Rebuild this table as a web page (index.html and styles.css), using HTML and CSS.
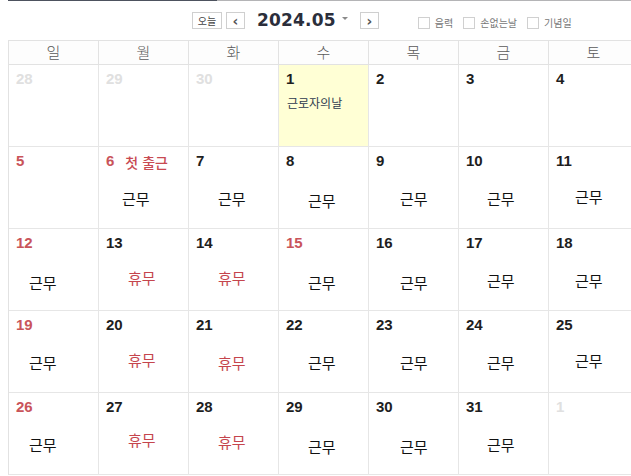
FILE: index.html
```html
<!DOCTYPE html>
<html lang="ko">
<head>
<meta charset="utf-8">
<link rel="stylesheet" href="styles.css">
</head>
<body>
<div class="topline"><span class="tab"></span></div>
<div class="toolbar">
  <button class="btn today">오늘</button>
  <button class="btn arrow">&#8249;</button>
  <div class="title">2024.05</div>
  <span class="caret"></span>
  <button class="btn arrow">&#8250;</button>
  <label class="chk first"><span class="box"></span>음력</label>
  <label class="chk"><span class="box"></span>손없는날</label>
  <label class="chk"><span class="box"></span>기념일</label>
</div>
<div class="cal">
  <div class="head">일</div><div class="head">월</div><div class="head">화</div><div class="head">수</div><div class="head">목</div><div class="head">금</div><div class="head">토</div>

  <div class="day"><div class="num other">28</div></div>
  <div class="day"><div class="num other">29</div></div>
  <div class="day"><div class="num other">30</div></div>
  <div class="day now"><div class="num">1</div><div class="event">근로자의날</div></div>
  <div class="day"><div class="num">2</div></div>
  <div class="day"><div class="num">3</div></div>
  <div class="day"><div class="num">4</div></div>

  <div class="day"><div class="num red">5</div></div>
  <div class="day"><div class="num red">6<span class="memo">첫 출근</span></div><div class="work on">근무</div></div>
  <div class="day"><div class="num">7</div><div class="work on">근무</div></div>
  <div class="day"><div class="num">8</div><div class="work on low">근무</div></div>
  <div class="day"><div class="num">9</div><div class="work on">근무</div></div>
  <div class="day"><div class="num">10</div><div class="work on">근무</div></div>
  <div class="day"><div class="num">11</div><div class="work on high">근무</div></div>

  <div class="day"><div class="num red">12</div><div class="work on low">근무</div></div>
  <div class="day"><div class="num">13</div><div class="work off">휴무</div></div>
  <div class="day"><div class="num">14</div><div class="work off">휴무</div></div>
  <div class="day"><div class="num red">15</div><div class="work on low">근무</div></div>
  <div class="day"><div class="num">16</div><div class="work on low">근무</div></div>
  <div class="day"><div class="num">17</div><div class="work on">근무</div></div>
  <div class="day"><div class="num">18</div><div class="work on">근무</div></div>

  <div class="day"><div class="num red">19</div><div class="work on">근무</div></div>
  <div class="day"><div class="num">20</div><div class="work off">휴무</div></div>
  <div class="day"><div class="num">21</div><div class="work off low">휴무</div></div>
  <div class="day"><div class="num">22</div><div class="work on">근무</div></div>
  <div class="day"><div class="num">23</div><div class="work on">근무</div></div>
  <div class="day"><div class="num">24</div><div class="work on">근무</div></div>
  <div class="day"><div class="num">25</div><div class="work on high">근무</div></div>

  <div class="day"><div class="num red">26</div><div class="work on">근무</div></div>
  <div class="day"><div class="num">27</div><div class="work off high">휴무</div></div>
  <div class="day"><div class="num">28</div><div class="work off">휴무</div></div>
  <div class="day"><div class="num">29</div><div class="work on low">근무</div></div>
  <div class="day"><div class="num">30</div><div class="work on low">근무</div></div>
  <div class="day"><div class="num">31</div><div class="work on">근무</div></div>
  <div class="day"><div class="num other">1</div></div>
</div>
</body>
</html>
```

FILE: styles.css
```css
html, body {
  margin: 0;
  padding: 0;
  background: #fff;
  overflow: hidden;
  width: 631px;
  height: 476px;
  font-family: "Noto Sans CJK KR", "Noto Sans", sans-serif;
}

.topline {
  margin-left: 8px;
  height: 1px;
  background: #b4b4b6;
  display: flex;
}
.tab {
  width: 209px;
  background: #4d525e;
}

.toolbar {
  height: 28px;
  padding: 0 0 11px 192px;
  display: flex;
  align-items: flex-end;
}

.btn {
  box-sizing: border-box;
  height: 17px;
  margin: 0;
  padding: 0;
  border: 1px solid #cfcfcf;
  background: #fff;
  color: #444;
  font-family: "Noto Sans CJK KR", sans-serif;
  font-size: 10px;
  line-height: 14px;
}
.today {
  width: 30px;
}
.arrow {
  width: 19px;
  margin-left: 4px;
  font-family: "DejaVu Sans", sans-serif;
  font-size: 14px;
  font-weight: bold;
  line-height: 12px;
  color: #555;
}
.title {
  margin-left: 12px;
  font-family: "DejaVu Sans", sans-serif;
  font-weight: bold;
  font-size: 17px;
  line-height: 17px;
  color: #2b2e3b;
  letter-spacing: 0.2px;
}
.caret {
  width: 0;
  height: 0;
  margin: 0 0 9px 6px;
  border-left: 3px solid transparent;
  border-right: 3px solid transparent;
  border-top: 3px solid #8a8a8a;
}
.caret + .arrow {
  margin-left: 12px;
}

.chk {
  display: flex;
  align-items: center;
  height: 12px;
  margin-left: 10px;
  font-size: 10px;
  line-height: 12px;
  color: #777;
}
.chk.first {
  margin-left: 39px;
}
.box {
  box-sizing: border-box;
  width: 12px;
  height: 12px;
  border: 1px solid #d0d0d0;
  background: #fff;
  margin-right: 5px;
}

.cal {
  margin-left: 8px;
  display: grid;
  grid-template-columns: repeat(7, 90px);
  grid-template-rows: 24px repeat(5, 82px);
  border-top: 1px solid #e2e2e2;
  border-left: 1px solid #e2e2e2;
  width: 630px;
}
.head {
  box-sizing: border-box;
  border-right: 1px solid #e2e2e2;
  border-bottom: 1px solid #e2e2e2;
  background: #fdfdfd;
  text-align: center;
  font-size: 15px;
  font-weight: 300;
  line-height: 22px;
  color: #5a5a5a;
}
.day {
  box-sizing: border-box;
  border-right: 1px solid #e6e6e6;
  border-bottom: 1px solid #e6e6e6;
  padding: 5px 0 0 0;
  display: flex;
  flex-direction: column;
}
.now {
  background: #ffffd5;
}
.num {
  padding-left: 7px;
  font-family: "Liberation Sans", Arial, sans-serif;
  font-weight: bold;
  font-size: 15px;
  line-height: 17px;
  color: #1e1e1e;
}
.num.red {
  color: #c9545a;
}
.num.other {
  color: #e0e0e0;
}
.memo {
  margin-left: 11px;
  position: relative;
  top: 2px;
  font-family: "Noto Sans CJK KR", sans-serif;
  font-weight: 500;
  font-size: 14px;
  color: #c84a52;
}
.event {
  margin: 9px 0 0 8px;
  font-size: 12px;
  line-height: 14px;
  color: #2e3a4e;
}
.work {
  margin-top: 22px;
  padding-left: 29px;
  font-size: 15px;
  line-height: 16px;
  color: #111;
}
.work.off {
  color: #c5454d;
  margin-top: 19px;
}
.work.low {
  margin-top: 24px;
}
.work.off.low {
  margin-top: 22px;
}
.work.high {
  margin-top: 20px;
}
.work.off.high {
  margin-top: 17px;
}
.day:nth-child(7n+1) .work {
  padding-left: 20px;
}
.day:nth-child(7n+2) .work.on {
  padding-left: 23px;
}
.day:nth-child(7n+5) .work {
  padding-left: 31px;
}
.day:nth-child(7n+6) .work {
  padding-left: 28px;
}
.day:nth-child(7n) .work {
  padding-left: 26px;
}
```
